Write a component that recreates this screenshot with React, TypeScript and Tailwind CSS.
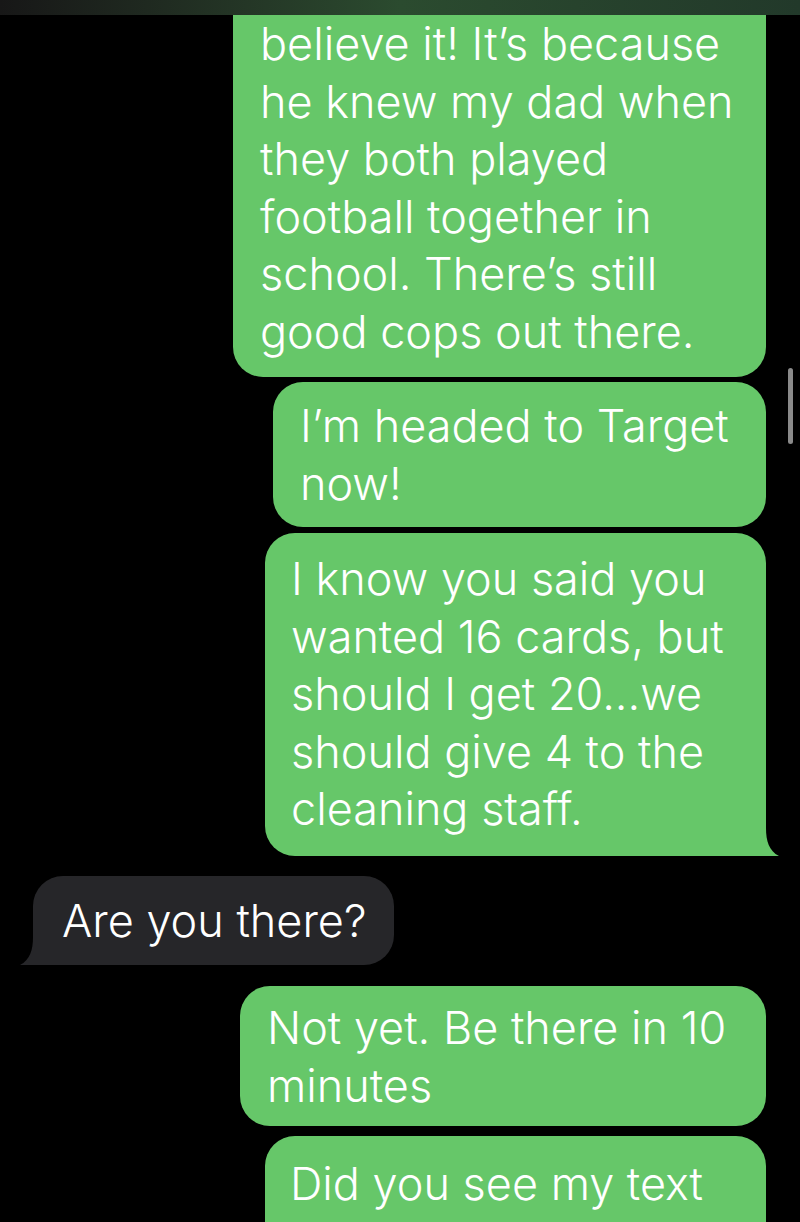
import type { ReactNode } from "react";

const GREEN = "bg-[#66c769]";

function TailRight() {
  return (
    <svg className="absolute -right-[13px] bottom-0 h-[28px] w-[28px] text-[#66c769]" viewBox="0 0 28 28" fill="currentColor">
      <path d="M0 0 H15 C15 13 18 23 28 28 H0 Z" />
    </svg>
  );
}

function TailLeft() {
  return (
    <svg className="absolute -left-[13px] bottom-0 h-[28px] w-[28px] text-[#262629]" viewBox="0 0 28 28" fill="currentColor">
      <path d="M28 0 H13 C13 13 10 23 0 28 H28 Z" />
    </svg>
  );
}

type BubbleProps = {
  lines: string[];
  className: string;
  tail?: boolean;
};

function Sent({ lines, className, tail }: BubbleProps) {
  return (
    <div className={`relative ${GREEN} ${tail ? "rounded-[30px] rounded-br-none" : "rounded-[30px]"} ${className}`}>
      {lines.map((l) => (
        <div key={l} className="whitespace-nowrap">{l}</div>
      ))}
      {tail && <TailRight />}
    </div>
  );
}

function Row({ children, className = "" }: { children: ReactNode; className?: string }) {
  return <div className={`flex justify-end pr-[34px] ${className}`}>{children}</div>;
}

export default function App() {
  return (
    <div
      className="relative h-[1222px] w-[800px] overflow-hidden bg-black text-white text-[45px] font-light leading-[57.5px] tracking-normal"
      style={{ fontFamily: "Inter, 'Noto Sans', sans-serif" }}
    >
      {/* blurred status strip */}
      <div className="h-[15px] bg-linear-to-r from-[#171717] via-[#2b4b2f] to-[#22392a]" />

      <Row>
        <Sent
          className="w-[533px] rounded-t-none pl-[27px] pt-0 pb-[17px]"
          lines={[
            "believe it! It’s because",
            "he knew my dad when",
            "they both played",
            "football together in",
            "school. There’s still",
            "good cops out there.",
          ]}
        />
      </Row>

      <Row className="mt-[5px]">
        <Sent className="w-[493px] pl-[27px] py-[15px]" lines={["I’m headed to Target", "now!"]} />
      </Row>

      <Row className="mt-[6px]">
        <Sent
          tail
          className="w-[501px] pl-[26px] pt-[17px] pb-[18px]"
          lines={[
            "I know you said you",
            "wanted 16 cards, but",
            "should I get 20...we",
            "should give 4 to the",
            "cleaning staff.",
          ]}
        />
      </Row>

      <div className="mt-[20px] flex pl-[33px]">
        <div className="relative rounded-[30px] rounded-bl-none bg-[#262629] pl-[29px] pr-[28px] py-[16px]">
          Are you there?
          <TailLeft />
        </div>
      </div>

      <Row className="mt-[21px]">
        <Sent className="w-[526px] pl-[27px] pt-[13px] pb-[12px]" lines={["Not yet. Be there in 10", "minutes"]} />
      </Row>

      <Row className="mt-[10px]">
        <Sent className="h-[120px] w-[501px] pl-[25px] pt-[19px]" lines={["Did you see my text"]} />
      </Row>

      {/* scroll indicator */}
      <div className="absolute left-[788px] top-[368px] h-[76px] w-[5px] rounded-full bg-[#8a8a8a]" />
    </div>
  );
}
